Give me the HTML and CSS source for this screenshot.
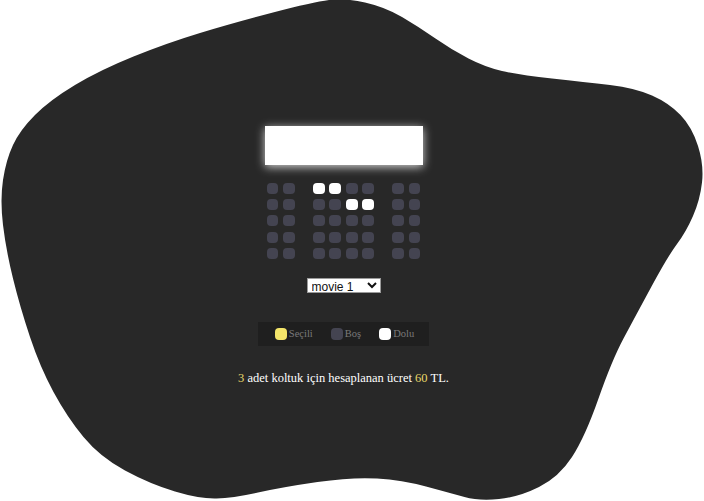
FILE: index.html
```html
<!DOCTYPE html>
<html lang="tr">
<head>
<meta charset="utf-8">
<title>Sinema Koltuk Seçimi</title>
<link rel="stylesheet" href="styles.css">
</head>
<body>
<svg class="blob" viewBox="0 0 704 501" aria-hidden="true">
  <path d="M273,12.5 Q313,2 329,0 Q345,-2 365,2.5 Q385,7 402,17 Q419,27 435.5,38.5 Q452,50 468.5,58.5 Q485,67 502,71 Q519,75 552,78.5 Q585,82 610,85 Q635,88 652,95.5 Q669,103 680.5,115 Q692,127 698,146 Q704,165 702,182.5 Q700,200 693,216 Q686,232 677,244 Q668,256 651.5,286.5 Q635,317 623.5,338.5 Q612,360 598.5,398.5 Q585,437 572,457 Q559,477 539,487 Q519,497 499,499 Q479,501 464.5,497 Q450,493 426,486.5 Q402,480 377,478.5 Q352,477 317.5,482 Q283,487 258,492.5 Q233,498 216.5,498.5 Q200,499 175,491.5 Q150,484 125,470.5 Q100,457 83.5,437 Q67,417 53.5,392 Q40,367 30,337 Q20,307 13,278.5 Q6,250 3,225 Q0,200 3,180 Q6,160 13,145 Q20,130 35,115 Q50,100 75,85 Q100,70 133.5,56.5 Q167,43 200,33 Q233,23 273,12.5 Z"/>
</svg>
<main class="page">
  <div class="screen"></div>
  <div class="hall">
    <div class="row"><span class="seat"></span><span class="seat"></span><span class="seat occupied"></span><span class="seat occupied"></span><span class="seat"></span><span class="seat"></span><span class="seat"></span><span class="seat"></span></div>
    <div class="row"><span class="seat"></span><span class="seat"></span><span class="seat"></span><span class="seat"></span><span class="seat occupied"></span><span class="seat occupied"></span><span class="seat"></span><span class="seat"></span></div>
    <div class="row"><span class="seat"></span><span class="seat"></span><span class="seat"></span><span class="seat"></span><span class="seat"></span><span class="seat"></span><span class="seat"></span><span class="seat"></span></div>
    <div class="row"><span class="seat"></span><span class="seat"></span><span class="seat"></span><span class="seat"></span><span class="seat"></span><span class="seat"></span><span class="seat"></span><span class="seat"></span></div>
    <div class="row"><span class="seat"></span><span class="seat"></span><span class="seat"></span><span class="seat"></span><span class="seat"></span><span class="seat"></span><span class="seat"></span><span class="seat"></span></div>
  </div>
  <select class="movie">
    <option>movie 1</option>
    <option>movie 2</option>
    <option>movie 3</option>
  </select>
  <ul class="legend">
    <li><span class="mark selected"></span><small>Seçili</small></li>
    <li><span class="mark"></span><small>Boş</small></li>
    <li><span class="mark occupied"></span><small>Dolu</small></li>
  </ul>
  <p class="total"><span class="num">3</span> adet koltuk için hesaplanan ücret <span class="num">60</span> TL.</p>
</main>
</body>
</html>
```

FILE: styles.css
```css
html, body {
  margin: 0;
  height: 100%;
}

body {
  background: #ffffff;
  position: relative;
  overflow: hidden;
  font-family: "Liberation Serif", "Times New Roman", serif;
}

.blob {
  position: absolute;
  left: 0;
  top: 0;
  width: 704px;
  height: 501px;
  fill: #282828;
  z-index: 0;
}

.page {
  position: relative;
  z-index: 1;
  width: 687px;
  display: flex;
  flex-direction: column;
  align-items: center;
  padding-top: 126px;
}

.screen {
  width: 158px;
  height: 39px;
  background: #ffffff;
  box-shadow: 0 2px 9px rgba(255, 255, 255, 0.8);
  margin-bottom: 15px;
}

.hall {
  display: flex;
  flex-direction: column;
}

.row {
  display: flex;
}

.seat {
  width: 11.7px;
  height: 11px;
  margin: 2.7px 2.35px;
  background: #444451;
  border-radius: 4px;
}

.row .seat:nth-child(2),
.row .seat:nth-child(6) {
  margin-right: 15.95px;
}

.seat.occupied {
  background: #ffffff;
}

.movie {
  margin-top: 16px;
  width: 74px;
  height: 15px;
  padding: 0;
  font-family: "Liberation Sans", Arial, sans-serif;
  font-size: 12px;
  color: #111;
  background: #ffffff;
  border: 1px solid #9a9a9a;
  border-radius: 0;
}

.legend {
  list-style: none;
  margin: 29px 0 0;
  padding: 0 15px 0 17px;
  height: 24px;
  display: flex;
  align-items: center;
  gap: 18px;
  background: #1f1f1f;
}

.legend li {
  display: flex;
  align-items: center;
  gap: 2px;
}

.legend small {
  font-size: 10.5px;
  color: #7a7a7a;
}

.mark {
  width: 12px;
  height: 12px;
  border-radius: 4px;
  background: #444451;
}

.mark.selected {
  background: #f3e56a;
}

.mark.occupied {
  background: #ffffff;
}

.total {
  margin: 25px 0 0;
  font-size: 12.5px;
  color: #ffffff;
}

.num {
  color: #e8d86a;
}
```
